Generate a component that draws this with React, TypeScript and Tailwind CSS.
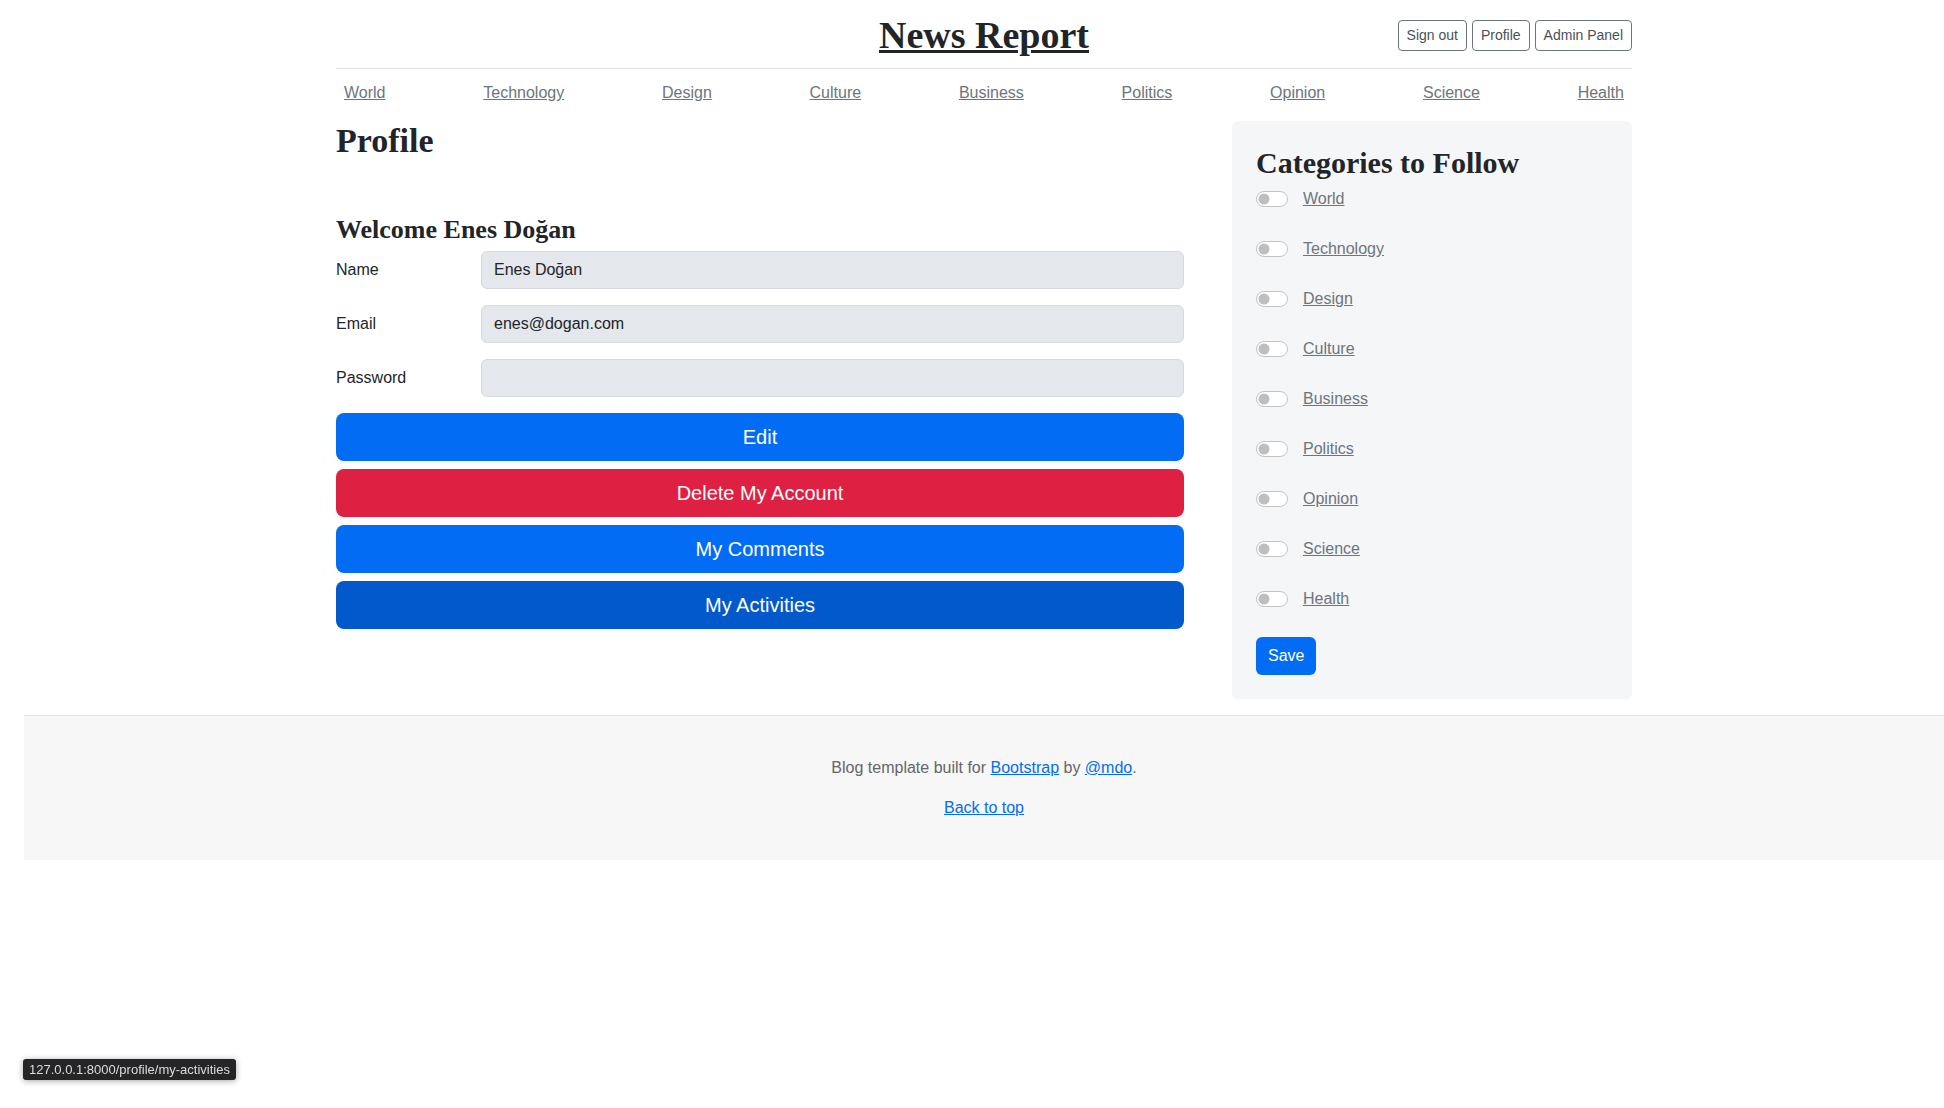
const categories = [
  "World",
  "Technology",
  "Design",
  "Culture",
  "Business",
  "Politics",
  "Opinion",
  "Science",
  "Health",
];

const serif = "font-['Liberation_Serif','Times_New_Roman',serif]";

const Toggle = () => (
  <span className="flex h-4 w-8 items-center rounded-full border border-[#c4c4c4] bg-white">
    <svg width="16" height="16" viewBox="-8 -8 16 16" className="-ml-px">
      <circle r="5.5" fill="#bfbfbf" />
    </svg>
  </span>
);

const Field = ({ label, value }: { label: string; value: string }) => (
  <div className="mb-4 grid grid-cols-[145px_1fr]">
    <label className="pt-[7px] text-base leading-6">{label}</label>
    <div className="flex h-[38px] items-center rounded-md border border-[#d6dadf] bg-[#e4e7eb] px-3 text-base text-[#212529]">
      {value}
    </div>
  </div>
);

const App = () => {
  return (
    <div className="min-h-screen bg-white font-['Liberation_Sans',Arial,sans-serif] text-base leading-6 text-[#212529]">
      <div className="ml-[24px] w-[1920px]">
        <div className="mx-auto w-[1296px]">
          <header className="border-b border-[#dee2e6] py-4 leading-none">
            <div className="grid h-9 grid-cols-3 items-center">
              <div />
              <div className="text-center">
                <a className={`${serif} text-[38px] font-bold text-[#212529] underline`}>News Report</a>
              </div>
              <div className="flex justify-end gap-[5px]">
                {["Sign out", "Profile", "Admin Panel"].map((b) => (
                  <button
                    key={b}
                    className="h-[31px] rounded border border-[#6c757d] px-2 text-[14px] leading-[21px] text-[#4a5056]"
                  >
                    {b}
                  </button>
                ))}
              </div>
            </div>
          </header>

          <div className="mb-2 h-[44px] py-1">
            <nav className="flex justify-between">
              {categories.map((c) => (
                <a key={c} className="p-2 leading-6 text-[#6c757d] underline">
                  {c}
                </a>
              ))}
            </nav>
          </div>

          <main className="flex items-start justify-between">
            <div className="w-[848px]">
              <h2 className={`${serif} mb-2 text-[34px] font-bold leading-[40px]`}>Profile</h2>
              <h4 className={`${serif} mb-[6px] mt-[53px] text-[26px] font-bold leading-[31px]`}>Welcome Enes Doğan</h4>
              <Field label="Name" value="Enes Doğan" />
              <Field label="Email" value="enes@dogan.com" />
              <Field label="Password" value="" />
              <div className="flex flex-col gap-2">
                <button className="h-[48px] w-full rounded-lg bg-[#036cf5] text-[20px] text-white">Edit</button>
                <button className="h-[48px] w-full rounded-lg bg-[#de2042] text-[20px] text-white">Delete My Account</button>
                <button className="h-[48px] w-full rounded-lg bg-[#036cf5] text-[20px] text-white">My Comments</button>
                <button className="h-[48px] w-full rounded-lg bg-[#0259cb] text-[20px] text-white">My Activities</button>
              </div>
            </div>

            <aside className="mb-4 w-[400px] rounded-md bg-[#f5f6f8] p-6">
              <h3 className={`${serif} mb-[6px] text-[30px] font-bold leading-[36px]`}>Categories to Follow</h3>
              <div className="flex flex-col gap-[26px]">
                {categories.map((c) => (
                  <div key={c} className="flex h-6 items-center gap-[15px]">
                    <Toggle />
                    <a className="text-[#6c757d] underline">{c}</a>
                  </div>
                ))}
              </div>
              <button className="mt-[26px] h-[38px] rounded-md bg-[#036cf5] px-3 text-white">Save</button>
            </aside>
          </main>
        </div>

        <footer className="border-t border-[#e5e5e5] bg-[#f7f7f7] py-10 text-center text-[#666]">
          <p className="mb-4">
            Blog template built for <a className="text-[#036cf5] underline">Bootstrap</a> by{" "}
            <a className="text-[#036cf5] underline">@mdo</a>.
          </p>
          <p>
            <a className="text-[#036cf5] underline">Back to top</a>
          </p>
        </footer>
      </div>

      <div className="fixed left-[23px] top-[1059px] flex h-[21px] items-center rounded-[3px] bg-[#252527] px-[6px] text-[13px] leading-none text-[#dcdcdc] shadow-[0_1px_6px_rgba(0,0,0,0.35)]">
        127.0.0.1:8000/profile/my-activities
      </div>
    </div>
  );
};

export default App;
